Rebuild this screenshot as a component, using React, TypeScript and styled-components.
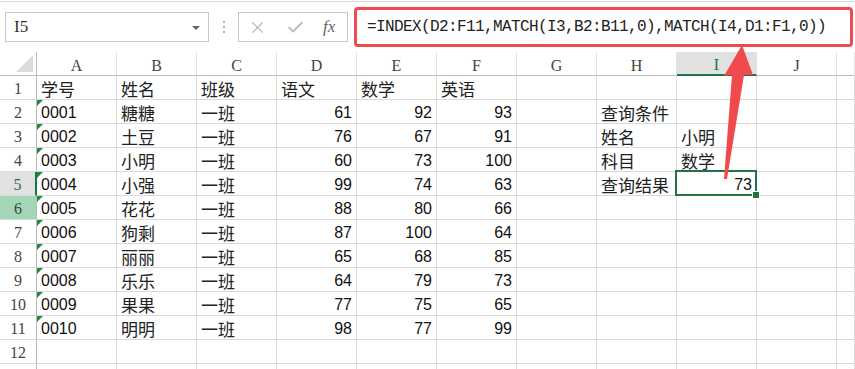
import React from 'react';
import styled, { createGlobalStyle, css } from 'styled-components';
import { X, Check } from 'lucide-react';

const GlobalStyle = createGlobalStyle`
  html, body {
    margin: 0;
    padding: 0;
    background: #ffffff;
  }
  body {
    font-family: "Liberation Sans", "Noto Sans CJK SC", sans-serif;
    overflow: hidden;
  }
`;

const GREEN = '#217346';
const RED = '#ee4b4e';

export const Page = styled.div`
  position: relative;
  width: 855px;
  height: 369px;
  overflow: hidden;
  background: #fff;
`;

export const TopBar = styled.div`
  box-sizing: border-box;
  margin-top: 1px;
  height: 51px;
  border-top: 1px solid #dadada;
  display: flex;
  align-items: center;
`;

export const NameBox = styled.div`
  box-sizing: border-box;
  margin-left: 5px;
  width: 204px;
  height: 30px;
  border: 1px solid #c8c8c8;
  display: flex;
  align-items: center;
  justify-content: space-between;
  padding: 0 8px 0 8px;
  font-family: "Liberation Serif", serif;
  font-size: 17px;
  color: #333;
`;

export const Caret = styled.span`
  width: 0;
  height: 0;
  border-left: 4px solid transparent;
  border-right: 4px solid transparent;
  border-top: 4px solid #666;
  margin-top: 1px;
`;

export const Dots = styled.div`
  margin-left: 14px;
  display: flex;
  flex-direction: column;
  gap: 3px;
  span {
    width: 2px;
    height: 2px;
    background: #b0b0b0;
  }
`;

export const IconBox = styled.div`
  box-sizing: border-box;
  margin-left: 13px;
  width: 110px;
  height: 30px;
  border: 1px solid #c8c8c8;
  display: flex;
  align-items: center;
  padding-left: 9px;
  gap: 19px;
  color: #bdbdbd;
`;

export const Fx = styled.span`
  font-family: "Liberation Serif", serif;
  font-style: italic;
  font-size: 17px;
  color: #666;
  margin-left: -1px;
`;

export const FormulaFrame = styled.div`
  box-sizing: border-box;
  margin-left: 6px;
  margin-right: 2px;
  flex: 1;
  height: 40px;
  border: 3px solid ${RED};
  border-radius: 4px;
  display: flex;
  align-items: center;
  padding-left: 10px;
  font-family: "Liberation Mono", monospace;
  font-size: 16px;
  letter-spacing: -0.6px;
  color: #222;
`;

export const Grid = styled.div`
  display: grid;
  grid-template-columns: 37px repeat(10, 80px) 1fr;
  grid-auto-rows: 24px;
`;

const baseCell = css`
  box-sizing: border-box;
  border-right: 1px solid #dadada;
  border-bottom: 1px solid #dadada;
  display: flex;
  align-items: flex-end;
  overflow: hidden;
  white-space: nowrap;
`;

export const Corner = styled.div`
  ${baseCell};
  position: relative;
  border-right-color: #bcbcbc;
  border-bottom-color: #bcbcbc;
  &::after {
    content: '';
    position: absolute;
    right: 3px;
    bottom: 3px;
    width: 0;
    height: 0;
    border-left: 17px solid transparent;
    border-bottom: 17px solid #dcdcdc;
  }
`;

export const ColHead = styled.div<{ $active?: boolean }>`
  ${baseCell};
  justify-content: center;
  border-right-color: #e2e2e2;
  border-bottom-color: #bcbcbc;
  font-family: "Liberation Serif", serif;
  font-size: 16px;
  line-height: 19px;
  color: #444;
  ${(p) =>
    p.$active &&
    css`
      background: #e1e1e1;
      color: ${GREEN};
      border-bottom: 2px solid ${GREEN};
    `}
`;

export const RowHead = styled.div<{ $mode?: 'active' | 'hover' }>`
  ${baseCell};
  justify-content: center;
  border-right-color: #bcbcbc;
  font-family: "Liberation Serif", serif;
  font-size: 16px;
  line-height: 20px;
  color: #444;
  ${(p) =>
    p.$mode === 'active' &&
    css`
      background: #e1e1e1;
      color: ${GREEN};
      border-right: 2px solid ${GREEN};
    `}
  ${(p) =>
    p.$mode === 'hover' &&
    css`
      background: #a2d6b6;
    `}
`;

export const Cell = styled.div<{ $num?: boolean; $cjk?: boolean; $flag?: boolean; $selected?: boolean }>`
  ${baseCell};
  position: relative;
  justify-content: ${(p) => (p.$num ? 'flex-end' : 'flex-start')};
  padding: 0 4px 0 4px;
  font-size: ${(p) => (p.$cjk ? '17px' : '16px')};
  line-height: 20px;
  color: #111;
  ${(p) =>
    p.$cjk &&
    css`
      font-family: "Noto Sans CJK SC", sans-serif;
      color: #222;
    `}
  ${(p) =>
    p.$flag &&
    css`
      &::before {
        content: '';
        position: absolute;
        left: 0;
        top: 0;
        width: 0;
        height: 0;
        border-top: 6px solid #1e8a3c;
        border-right: 6px solid transparent;
      }
    `}
  ${(p) =>
    p.$selected &&
    css`
      overflow: visible;
      &::after {
        content: '';
        position: absolute;
        left: -2px;
        top: -2px;
        right: -1px;
        bottom: -1px;
        border: 2px solid ${GREEN};
        pointer-events: none;
      }
    `}
`;

export const Handle = styled.span`
  position: absolute;
  right: -4px;
  bottom: -4px;
  width: 6px;
  height: 6px;
  background: ${GREEN};
  border: 1px solid #fff;
  z-index: 2;
`;

export const ArrowLayer = styled.svg`
  position: absolute;
  left: 0;
  top: 0;
  pointer-events: none;
`;

const columns = ['A', 'B', 'C', 'D', 'E', 'F', 'G', 'H', 'I', 'J', ''];

type Val = { v: string; num?: boolean; cjk?: boolean; flag?: boolean; sel?: boolean };

const students = [
  ['0001', '糖糖', 61, 92, 93],
  ['0002', '土豆', 76, 67, 91],
  ['0003', '小明', 60, 73, 100],
  ['0004', '小强', 99, 74, 63],
  ['0005', '花花', 88, 80, 66],
  ['0006', '狗剩', 87, 100, 64],
  ['0007', '丽丽', 65, 68, 85],
  ['0008', '乐乐', 64, 79, 73],
  ['0009', '果果', 77, 75, 65],
  ['0010', '明明', 98, 77, 99],
];

const lookup: Record<number, [Val, Val]> = {
  2: [{ v: '查询条件', cjk: true }, { v: '' }],
  3: [{ v: '姓名', cjk: true }, { v: '小明', cjk: true }],
  4: [{ v: '科目', cjk: true }, { v: '数学', cjk: true }],
  5: [{ v: '查询结果', cjk: true }, { v: '73', num: true, sel: true }],
};

function buildRow(r: number): Val[] {
  const row: Val[] = Array.from({ length: 11 }, () => ({ v: '' }));
  if (r === 1) {
    ['学号', '姓名', '班级', '语文', '数学', '英语'].forEach((t, i) => (row[i] = { v: t, cjk: true }));
  } else if (r <= 11) {
    const s = students[r - 2];
    row[0] = { v: String(s[0]), flag: true };
    row[1] = { v: String(s[1]), cjk: true };
    row[2] = { v: '一班', cjk: true };
    row[3] = { v: String(s[2]), num: true };
    row[4] = { v: String(s[3]), num: true };
    row[5] = { v: String(s[4]), num: true };
  }
  if (lookup[r]) {
    row[7] = lookup[r][0];
    row[8] = lookup[r][1];
  }
  return row;
}

const App = () => {
  // row 13 only peeks in at the bottom edge, its label stays out of view
  const rows = Array.from({ length: 13 }, (_, i) => i + 1);
  return (
    <Page>
      <GlobalStyle />
      <TopBar>
        <NameBox>
          <span>I5</span>
          <Caret />
        </NameBox>
        <Dots>
          <span />
          <span />
          <span />
        </Dots>
        <IconBox>
          <X size={19} strokeWidth={1.6} />
          <Check size={19} strokeWidth={2.4} />
          <Fx>fx</Fx>
        </IconBox>
        <FormulaFrame>=INDEX(D2:F11,MATCH(I3,B2:B11,0),MATCH(I4,D1:F1,0))</FormulaFrame>
      </TopBar>

      <Grid>
        <Corner />
        {columns.map((c, i) => (
          <ColHead key={i} $active={c === 'I'}>
            {c}
          </ColHead>
        ))}
        {rows.map((r) => (
          <React.Fragment key={r}>
            <RowHead $mode={r === 5 ? 'active' : r === 6 ? 'hover' : undefined}>{r < 13 ? r : ''}</RowHead>
            {buildRow(r).map((cell, ci) => (
              <Cell key={ci} $num={cell.num} $cjk={cell.cjk} $flag={cell.flag} $selected={cell.sel}>
                {cell.v}
                {cell.sel && <Handle />}
              </Cell>
            ))}
          </React.Fragment>
        ))}
      </Grid>

      <ArrowLayer width="855" height="369" viewBox="0 0 855 369">
        <polygon
          points="742,45 753,75 744,75 727,179 724,179 732,75 724,76"
          fill="#f04a4d"
        />
      </ArrowLayer>
    </Page>
  );
};

export default App;
